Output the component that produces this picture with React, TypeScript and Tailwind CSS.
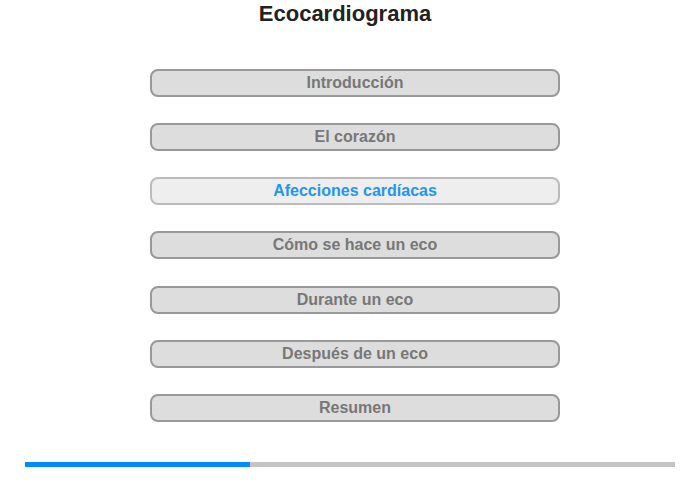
const secciones = [
  'Introducción',
  'El corazón',
  'Afecciones cardíacas',
  'Cómo se hace un eco',
  'Durante un eco',
  'Después de un eco',
  'Resumen',
];

const activa = 2;

export default function App() {
  return (
    <div className="w-[700px] h-[480px] bg-white font-[family-name:'Liberation_Sans',Arial,sans-serif] flex flex-col">
      <h1 className="h-[28px] leading-[28px] pr-[10px] text-center text-[22px] font-bold text-[#222]">Ecocardiograma</h1>
      <div className="mt-[41px] pl-[10px] flex flex-col items-center gap-[26px]">
        {secciones.map((s, i) => (
          <button
            key={s}
            className={
              (i === 4 ? 'mt-[1px] ' : '') +
              (i === activa
                ? 'w-[410px] h-[28px] rounded-[8px] border-2 border-[#bbbbbb] bg-[#eeeeee] text-[16px] font-bold text-[#2196f3]'
                : 'w-[410px] h-[28px] rounded-[8px] border-2 border-[#999999] bg-[#dddddd] text-[16px] font-bold text-[#777777]')
            }
          >
            {s}
          </button>
        ))}
      </div>
      <div className="mt-[40px] mx-[25px] h-[5px] bg-[#c4c4c4] flex">
        <div className="w-[225px] h-full bg-[#008cff]" />
      </div>
    </div>
  );
}
